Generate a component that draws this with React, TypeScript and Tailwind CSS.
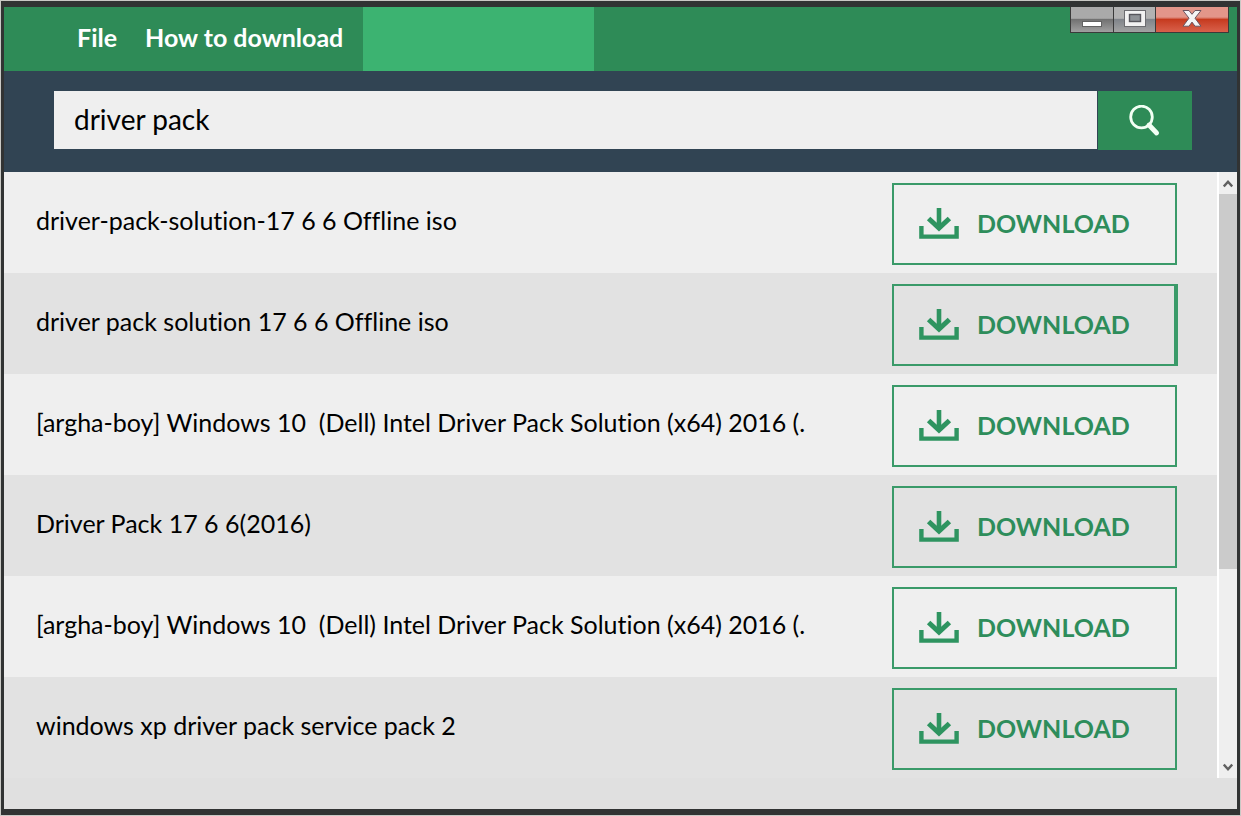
import { useState } from 'react';

interface SearchResult {
  id: number;
  title: string;
  focused?: boolean;
}

const RESULTS: SearchResult[] = [
  { id: 1, title: 'driver-pack-solution-17 6 6 Offline iso' },
  { id: 2, title: 'driver pack solution 17 6 6 Offline iso', focused: true },
  {
    id: 3,
    title: '[argha-boy] Windows 10  (Dell) Intel Driver Pack Solution (x64) 2016 (.',
  },
  { id: 4, title: 'Driver Pack 17 6 6(2016)' },
  {
    id: 5,
    title: '[argha-boy] Windows 10  (Dell) Intel Driver Pack Solution (x64) 2016 (.',
  },
  { id: 6, title: 'windows xp driver pack service pack 2' },
];

const DownloadIcon = () => (
  <svg width="40" height="32" viewBox="0 0 40 32" fill="none" stroke="#2e9460" aria-hidden="true">
    <path d="M20 0v20" strokeWidth="4.6" />
    <path d="M9.6 10.5L20 20.2l10.4-9.7" strokeWidth="5" />
    <path d="M2.4 18v10.6h35.2V18" strokeWidth="4.4" />
  </svg>
);

const SearchIcon = () => (
  <svg width="32" height="32" viewBox="0 0 32 32" fill="none" stroke="#f2fff4" aria-hidden="true">
    <circle cx="12.5" cy="12" r="10.8" strokeWidth="2.8" />
    <path d="M20 20l7.6 8" strokeWidth="4.8" strokeLinecap="round" />
  </svg>
);

const WindowControls = () => (
  <div className="flex h-[26px] border border-t-0 border-[#3a3a3a] mr-2 shrink-0">
    <button
      type="button"
      aria-label="Minimize"
      className="w-[43px] flex justify-center border-r border-[#3a3a3a] bg-linear-to-b from-[#aaaaaa] from-45% via-[#727272] via-50% to-[#a0a0a0]"
    >
      <svg width="22" height="25" viewBox="0 0 22 25">
        <rect x="1.5" y="14.5" width="19" height="5" fill="#ffffff" stroke="#626262" />
      </svg>
    </button>
    <button
      type="button"
      aria-label="Maximize"
      className="w-[42px] flex justify-center border-r border-[#3a3a3a] bg-linear-to-b from-[#b2b2b2] from-45% via-[#80848a] via-50% to-[#a3a3a3]"
    >
      <svg width="24" height="25" viewBox="0 0 24 25">
        <rect x="1.5" y="3.5" width="21" height="16" fill="#f2f2f2" stroke="#6c6c70" />
        <rect x="6.5" y="7.5" width="11" height="7" fill="#8e9296" stroke="#56565c" strokeWidth="1.4" />
      </svg>
    </button>
    <button
      type="button"
      aria-label="Close"
      className="w-[72px] flex justify-center bg-linear-to-b from-[#e3968a] from-40% via-[#c63a1e] via-50% to-[#d9604a]"
    >
      <svg width="24" height="25" viewBox="0 0 24 25">
        <path
          d="M3 3.5h6l3 3.8 3-3.8h6l-6 7.7 6 8h-6l-3-4.1-3 4.1H3l6-8z"
          fill="#f4f4f6"
          stroke="#6b5460"
        />
      </svg>
    </button>
  </div>
);

const ResultRow = ({ title, focused }: SearchResult) => (
  <li className="h-[101px] flex items-center pt-0.5 pl-8 pr-10 odd:bg-[#efefef] even:bg-[#e2e2e2]">
    <span className="flex-1 min-w-0 mr-[68px] pb-2 overflow-hidden whitespace-pre text-[25px] leading-8 text-black">
      {title}
    </span>
    <button
      type="button"
      className={`h-[82px] shrink-0 flex items-center pl-[25px] gap-[18px] border-2 border-[#3a9a69] text-[25px] leading-8 font-bold text-[#2e8d5b] ${
        focused ? 'w-[286px] border-r-4 -mr-px' : 'w-[285px]'
      }`}
    >
      <DownloadIcon />
      <span className="pb-0.5">DOWNLOAD</span>
    </button>
  </li>
);

const ScrollBar = () => (
  <div className="w-5 shrink-0 flex flex-col bg-[#efefef] border-l-2 border-white">
    <button type="button" aria-label="Scroll up" className="h-[22px] flex items-center justify-center">
      <svg width="10" height="9" viewBox="0 0 10 9" fill="none" stroke="#606060" strokeWidth="2.4">
        <path d="M0.8 7.5L5 2.8l4.2 4.7" />
      </svg>
    </button>
    <div className="flex-1">
      <div className="h-2/3 bg-[#cbcbcb]" />
    </div>
    <button type="button" aria-label="Scroll down" className="h-[22px] flex items-center justify-center">
      <svg width="10" height="9" viewBox="0 0 10 9" fill="none" stroke="#606060" strokeWidth="2.4">
        <path d="M0.8 1.5L5 6.2l4.2-4.7" />
      </svg>
    </button>
  </div>
);

export default function App() {
  const [query, setQuery] = useState('driver pack');

  return (
    <div className="min-h-screen flex p-px bg-[#c9c9c5] font-['Lato','Liberation_Sans',sans-serif] [font-variant-ligatures:none]">
      <div className="flex-1 min-w-0 flex flex-col bg-[#e0e0e0] border-[#313333] border-t-6 border-b-6 border-x-3">
        <header className="h-16 flex items-start justify-between bg-[#2e8b57]">
          <nav className="h-full flex items-center pl-[73px] text-[25px] leading-8 font-bold text-white">
            <button type="button" className="pb-1 mr-7">
              File
            </button>
            <button type="button" className="pb-1 mr-5 whitespace-nowrap">
              How to download
            </button>
            {/* 빈 메뉴 영역 */}
            <div className="w-[231px] h-full bg-[#3cb371]" />
          </nav>
          <WindowControls />
        </header>

        <form
          className="flex pt-5 pb-[22px] pl-[50px] pr-[45px] bg-[#314453]"
          onSubmit={(e) => e.preventDefault()}
        >
          <input
            type="text"
            aria-label="Search"
            value={query}
            onChange={(e) => setQuery(e.target.value)}
            className="flex-1 min-w-0 h-[58px] pl-5 pb-0.5 bg-[#efefef] text-[28px] text-black outline-none"
          />
          <button
            type="submit"
            aria-label="Search"
            className="w-[94px] h-[59px] ml-px flex items-center justify-center bg-[#2e8b57]"
          >
            <SearchIcon />
          </button>
        </form>

        {/* 검색 결과 목록 */}
        <main className="flex">
          <ul className="flex-1 min-w-0">
            {RESULTS.map((result) => (
              <ResultRow key={result.id} {...result} />
            ))}
          </ul>
          <ScrollBar />
        </main>
      </div>
    </div>
  );
}
